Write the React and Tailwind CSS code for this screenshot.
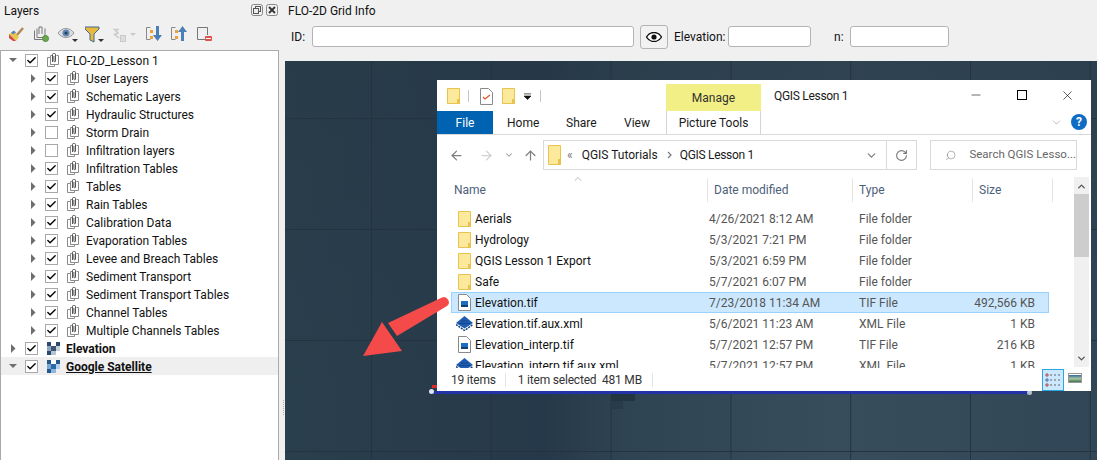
import React from 'react';
import { Check, ChevronDown, ChevronUp, ArrowLeft, ArrowRight, ArrowUp, RotateCw, Search, Minus, X } from 'lucide-react';

const FONT = "font-['Roboto','Noto_Sans',sans-serif]";

const groups = [
  ['User Layers', true],
  ['Schematic Layers', true],
  ['Hydraulic Structures', true],
  ['Storm Drain', false],
  ['Infiltration layers', false],
  ['Infiltration Tables', true],
  ['Tables', true],
  ['Rain Tables', true],
  ['Calibration Data', true],
  ['Evaporation Tables', true],
  ['Levee and Breach Tables', true],
  ['Sediment Transport', true],
  ['Sediment Transport Tables', true],
  ['Channel Tables', true],
  ['Multiple Channels Tables', true],
];

const files = [
  ['Aerials', '4/26/2021 8:12 AM', 'File folder', '', 'folder'],
  ['Hydrology', '5/3/2021 7:21 PM', 'File folder', '', 'folder'],
  ['QGIS Lesson 1 Export', '5/3/2021 6:59 PM', 'File folder', '', 'folder'],
  ['Safe', '5/7/2021 6:07 PM', 'File folder', '', 'folder'],
  ['Elevation.tif', '7/23/2018 11:34 AM', 'TIF File', '492,566 KB', 'tif', true],
  ['Elevation.tif.aux.xml', '5/6/2021 11:23 AM', 'XML File', '1 KB', 'xml'],
  ['Elevation_interp.tif', '5/7/2021 12:57 PM', 'TIF File', '216 KB', 'tif'],
  ['Elevation_interp.tif.aux.xml', '5/7/2021 12:57 PM', 'XML File', '1 KB', 'xml'],
];

const GroupIcon = () => (
  <svg width="13" height="14" viewBox="0 0 13 14" fill="none" stroke="#8a8a8a" strokeWidth="1" className="shrink-0">
    <path d="M3.5 4.5H.5v9h7v-2" />
    <path d="M5.5 2.5h-2v9h8v-9h-2" fill="#fff" />
    <path d="M5.5 9V1.5a1 1 0 0 1 1-1h1a1 1 0 0 1 1 1V8a.8.8 0 0 1-1.6 0V3" stroke="#555" />
  </svg>
);

const RasterIcon = ({ dark }) => (
  <svg width="13" height="13" viewBox="0 0 13 13" className="shrink-0">
    <rect x="0" y="0" width="4" height="4" fill={dark ? '#2c4a6e' : '#24598f'} />
    <rect x="9" y="0" width="4" height="4" fill={dark ? '#2c4a6e' : '#24598f'} />
    <rect x="4" y="0" width="5" height="4" fill="#fff" />
    <rect x="0" y="4" width="4" height="5" fill={dark ? '#8fa6bd' : '#7aa7d4'} />
    <rect x="4" y="4" width="5" height="5" fill={dark ? '#3c5672' : '#2a6aa8'} />
    <rect x="9" y="4" width="4" height="5" fill={dark ? '#c3d0dc' : '#b5d0ea'} />
    <rect x="0" y="9" width="4" height="4" fill={dark ? '#2c4a6e' : '#24598f'} />
    <rect x="4" y="9" width="5" height="4" fill={dark ? '#b4c4d4' : '#8fb8e0'} />
  </svg>
);

const Caret = ({ open }) =>
  open ? (
    <svg width="9" height="6" viewBox="0 0 9 6" className="shrink-0"><path d="M0 1h8L4 5z" fill="#6e6e6e" /></svg>
  ) : (
    <svg width="9" height="9" viewBox="0 0 9 9" className="shrink-0"><path d="M2 0l4.500 4.500L2 9z" fill="#6e6e6e" /></svg>
  );

const Box = ({ checked }) => (
  <span className="w-[13px] h-[13px] border border-[#a8a8a8] bg-white flex items-center justify-center shrink-0">
    {checked && <Check size={11} strokeWidth={3} className="text-black" />}
  </span>
);

const TreeRow = ({ indent, open, checked, icon, children, selected }) => (
  <div className={`h-[18px] flex items-center ${selected ? 'bg-[#efefef]' : ''} ${indent ? 'pl-[26px]' : 'pl-[6px]'}`}>
    <span className="w-[12px] flex items-center justify-center shrink-0"><Caret open={open} /></span>
    <span className="ml-[6px]"><Box checked={checked} /></span>
    <span className="ml-[9px] w-[13px] flex"><span>{icon}</span></span>
    <span className="ml-[6px] pt-px whitespace-nowrap">{children}</span>
  </div>
);

const Toolbar = () => (
  <div className="h-[30px] pb-[2px] flex items-center pl-[8px] shrink-0">
    <svg width="17" height="15" viewBox="0 0 17 15">
      <path d="M1 7l5-3 5 6-3 4z" fill="#e9c84a" />
      <path d="M1 7l7 7-3 0-4-3z" fill="#d14a4a" />
      <path d="M3 5.500l3-2 2 2-3 2z" fill="#5b84c4" />
      <path d="M9 8l6-7" stroke="#b08a52" strokeWidth="2.500" />
    </svg>
    <svg width="15" height="16" viewBox="0 0 15 16" className="ml-[9px]" fill="none" stroke="#777">
      <path d="M.5 4.500v9h8M3 2.500v9h8v-9" />
      <path d="M5 8V1h3v7" />
      <circle cx="11.500" cy="12.500" r="3" fill="#6aa84f" stroke="#4e8a3a" />
    </svg>
    <svg width="20" height="15" viewBox="0 0 20 15" className="ml-[9px]">
      <path d="M0 6c4-6 12-6 16 0-4 6-12 6-16 0z" fill="#dcdcdc" stroke="#999" />
      <circle cx="8" cy="6" r="3.500" fill="#5f86b5" />
      <circle cx="8" cy="6" r="1.500" fill="#24405f" />
      <path d="M14 12h6l-3 3z" fill="#333" />
    </svg>
    <svg width="19" height="17" viewBox="0 0 19 17" className="ml-[7px]">
      <path d="M0 1h14v2l-5 5v8l-4-2V8L0 3z" fill="#e8b93c" stroke="#3c6a96" strokeWidth="1" />
      <path d="M13 13h6l-3 3z" fill="#333" />
    </svg>
    <svg width="24" height="15" viewBox="0 0 24 15" className="ml-[8px]" fill="none" stroke="#c9c9c9">
      <path d="M7 2.500H2.500L6 6 2.500 7.500 7 11" strokeWidth="1.500" />
      <rect x="8.500" y="8.500" width="5" height="6" fill="#ddd" />
      <path d="M18 6h6l-3 3z" fill="#c9c9c9" stroke="none" />
    </svg>
    <svg width="17" height="16" viewBox="0 0 17 16" className="ml-[10px]">
      <path d="M.5 1.500h4M.5 1.500v12h4" fill="none" stroke="#888" />
      <rect x="4" y="4" width="3" height="3" fill="#e9a23b" /><rect x="4" y="10" width="3" height="3" fill="#e9a23b" />
      <path d="M10 0h3v9h3l-4.500 6L7 9h3z" fill="#4c7fb5" />
    </svg>
    <svg width="17" height="16" viewBox="0 0 17 16" className="ml-[8px]">
      <path d="M.5 1.500h4M.5 1.500v12h4" fill="none" stroke="#888" />
      <rect x="4" y="4" width="3" height="3" fill="#e9a23b" /><rect x="4" y="10" width="3" height="3" fill="#e9a23b" />
      <path d="M10 15h3V6h3L11.500 0 7 6h3z" fill="#4c7fb5" />
    </svg>
    <svg width="15" height="15" viewBox="0 0 15 15" className="ml-[9px]">
      <path d="M8 12.500H.5V.500h10V8" fill="none" stroke="#777" />
      <rect x="8" y="9" width="7" height="5" rx="1" fill="#e2504c" />
      <rect x="9" y="11" width="5" height="1" fill="#fff" />
    </svg>
  </div>
);

const Sidebar = () => (
  <div className="w-[285px] h-full shrink-0 flex flex-col relative">
    <div className="h-[20px] flex items-center justify-between pl-[4px] pr-[7px] shrink-0">
      <span className="pt-px">Layers</span>
      <span className="flex gap-[3px]">
        <svg width="12" height="12" viewBox="0 0 12 12" fill="none" stroke="#555">
          <rect x=".5" y=".5" width="11" height="11" rx="2" stroke="#888" />
          <rect x="4.500" y="2.500" width="5" height="5" /><rect x="2.500" y="4.500" width="5" height="5" fill="#eee" />
        </svg>
        <svg width="12" height="12" viewBox="0 0 12 12" fill="none">
          <rect x=".5" y=".5" width="11" height="11" rx="2" stroke="#888" />
          <path d="M3 3l6 6M9 3l-6 6" stroke="#333" strokeWidth="1.800" />
        </svg>
      </span>
    </div>
    <Toolbar />
    <div className="w-[279px] flex-1 bg-white border border-[#aaaaaa] border-b-0 text-[12px] text-[#111]">
      <TreeRow open checked icon={<GroupIcon />}>FLO-2D_Lesson 1</TreeRow>
      {groups.map(([name, on]) => (
        <TreeRow key={name} indent checked={on} icon={<GroupIcon />}>{name}</TreeRow>
      ))}
      <TreeRow checked icon={<RasterIcon dark />}><b>Elevation</b></TreeRow>
      <TreeRow open selected checked icon={<RasterIcon />}><b className="underline">Google Satellite</b></TreeRow>
    </div>
    <div className="absolute right-[1px] top-[400px] w-px h-[15px] border-l border-dotted border-[#aaa]" />
  </div>
);

const GridInfo = () => (
  <div className="h-[61px] shrink-0 text-[12px]">
    <div className="h-[20px] flex items-center pl-[3px] pt-px">FLO-2D Grid Info</div>
    <div className="h-[29px] flex items-center pl-[6px] mt-[2px]">
      <span className="w-[21px] pt-px">ID:</span>
      <span className="w-[322px] h-[21px] bg-white border border-[#b4b4b4] rounded-[3px]" />
      <span className="ml-[6px] w-[28px] h-[24px] bg-[#f2f2f2] border border-[#b4b4b4] rounded-[3px] flex items-center justify-center">
        <svg width="16" height="10" viewBox="0 0 16 10">
          <path d="M.5 5C4-1 12-1 15.500 5 12 11 4 11 .5 5z" fill="#fff" stroke="#111" strokeWidth="1.400" />
          <circle cx="8" cy="5" r="2.600" fill="#111" />
        </svg>
      </span>
      <span className="ml-[6px] w-[54px] pt-px">Elevation:</span>
      <span className="w-[83px] h-[21px] bg-white border border-[#b4b4b4] rounded-[3px]" />
      <span className="ml-[23px] w-[16px] pt-px">n:</span>
      <span className="w-[99px] h-[21px] bg-white border border-[#b4b4b4] rounded-[3px]" />
    </div>
  </div>
);

const Folder = ({ large }) => (
  large ? (
    <svg width="13" height="20" viewBox="0 0 13 20" className="shrink-0">
      <path d="M.5.500h12v19H.5z" fill="#fde99c" stroke="#e8c34e" />
      <rect x="10" y="14" width="3" height="6" fill="#e8c34e" />
    </svg>
  ) : (
    <svg width="13" height="16" viewBox="0 0 13 16" className="shrink-0">
      <path d="M.5.500h12v15H.5z" fill="#fde99c" stroke="#e8c34e" />
      <rect x="10" y="11" width="3" height="5" fill="#e8c34e" />
    </svg>
  )
);

const FileIcon = ({ kind }) => {
  if (kind === 'folder') return <Folder />;
  if (kind === 'tif') {
    return (
      <svg width="13" height="17" viewBox="0 0 13 17" className="shrink-0">
        <path d="M.5.500h8l4 4v12H.5z" fill="#fff" stroke="#8a8a8a" />
        <rect x="3" y="7" width="7" height="6" fill="#1c6fc0" />
        <rect x="3" y="11" width="7" height="2" fill="#123f73" />
      </svg>
    );
  }
  return (
    <svg width="17" height="15" viewBox="0 0 17 15" className="shrink-0">
      <path d="M0 8.500l8.500 6 8.500-6" fill="none" stroke="#123f7f" strokeWidth="1.500" strokeDasharray="2 1" />
      <path d="M8.500 0L17 7l-8.500 5.500L0 7z" fill="#1f5db4" />
      <path d="M5 5h7M3 7.500h11" stroke="#123f7f" strokeWidth=".8" />
    </svg>
  );
};

const Explorer = () => (
  <div className="absolute left-[437px] top-[80px] w-[654px] h-[311px] bg-white flex flex-col text-[12px] text-[#1a1a1a]">
    <div className="h-[31px] flex items-stretch shrink-0 relative">
      <div className="flex items-center pl-[10px] pt-[1px]">
        <Folder />
        <span className="ml-[8px] w-px h-[12px] bg-[#c4c4c4]" />
        <svg width="13" height="17" viewBox="0 0 13 17" className="ml-[11px]">
          <path d="M.5.500h8l4 4v12H.5z" fill="#fff" stroke="#8a8a8a" />
          <path d="M3 9l2 2 5-4" fill="none" stroke="#e0562c" strokeWidth="1.300" />
        </svg>
        <span className="ml-[9px]"><Folder /></span>
        <svg width="7" height="7" viewBox="0 0 8 7" className="ml-[9px]"><path d="M0 .5h8M0 3h8L4 7z" stroke="#111" fill="#111" strokeWidth=".8" /></svg>
        <span className="ml-[9px] w-px h-[12px] bg-[#c4c4c4]" />
      </div>
      <div className="absolute left-[229px] top-[4px] w-[95px] h-[27px] bg-[#f1ef85] flex items-center justify-center text-[#333]">Manage</div>
      <div className="absolute left-[337px] top-0 h-full flex items-center text-[12px] tracking-[-0.3px]">QGIS Lesson 1</div>
      <div className="ml-auto flex items-center pr-[16px] pb-[1px] text-black">
        <Minus size={14} strokeWidth={1} />
        <span className="ml-[34px] w-[10px] h-[10px] border border-black" />
        <X size={15} strokeWidth={1} className="ml-[33px]" />
      </div>
    </div>
    <div className="h-[24px] flex items-stretch shrink-0 border-b border-[#d9d9d9] relative">
      <div className="w-[56px] bg-[#0063b1] text-white flex items-center justify-center">File</div>
      <span className="ml-[14px] w-[59px] flex items-center">Home</span>
      <span className="w-[58px] flex items-center">Share</span>
      <span className="w-[42px] flex items-center">View</span>
      <span className="w-[95px] border-x border-[#d4d4d4] flex items-center justify-center">Picture Tools</span>
      <ChevronDown size={13} strokeWidth={1} className="absolute right-[28px] top-[5px] text-[#888]" />
      <span className="absolute right-[4px] top-[3px] w-[16px] h-[16px] rounded-full bg-[#0f6cc4] text-white font-bold flex items-center justify-center text-[12px]">?</span>
    </div>
    <div className="h-[40px] flex items-center shrink-0 pl-[12px]">
      <ArrowLeft size={15} className="text-[#7f7f7f]" />
      <ArrowRight size={15} className="ml-[15px] text-[#d0d0d0]" />
      <ChevronDown size={10} strokeWidth={2.500} className="ml-[10px] text-[#9a9a9a]" />
      <ArrowUp size={15} className="ml-[9px] text-[#7f7f7f]" />
      <div className="ml-[5px] w-[374px] h-[30px] border border-[#d9d9d9] flex items-center">
        <span className="ml-[4px]"><Folder large /></span>
        <span className="ml-[6px] text-[#777]">«</span>
        <span className="ml-[9px]">QGIS Tutorials</span>
        <svg width="5" height="8" viewBox="0 0 5 8" className="ml-[9px]"><path d="M1 1l3 3-3 3" fill="none" stroke="#777" strokeWidth="1.200" /></svg>
        <span className="ml-[8px] tracking-[-0.3px]">QGIS Lesson 1</span>
        <ChevronDown size={13} strokeWidth={2} className="ml-auto mr-[8px] text-[#777]" />
        <span className="w-[30px] h-full border-l border-[#d9d9d9] flex items-center justify-center">
          <RotateCw size={13} className="text-[#777]" />
        </span>
      </div>
      <div className="ml-[13px] w-[147px] h-[30px] border border-[#d9d9d9] flex items-center text-[#666]">
        <Search size={13} strokeWidth={1} className="ml-[14px] -scale-x-100 text-[#666]" />
        <span className="ml-[13px] whitespace-nowrap text-[11.500px]">Search QGIS Lesso...</span>
      </div>
    </div>
    <div className="flex-1 flex min-h-0 relative">
      <div className="flex-1 min-w-0">
        <div className="h-[24px] mt-[3px] flex items-center text-[#4c607a] relative">
          <span className="w-[271px] h-full pl-[17px] flex items-center border-r border-[#e5e5e5]">Name</span>
          <span className="w-[145px] h-full pl-[6px] flex items-center border-r border-[#e5e5e5]">Date modified</span>
          <span className="w-[120px] h-full pl-[6px] flex items-center border-r border-[#e5e5e5]">Type</span>
          <span className="w-[80px] h-full pl-[6px] flex items-center border-r border-[#e5e5e5]">Size</span>
          <ChevronUp size={12} strokeWidth={1} className="absolute left-[135px] -top-[5px] text-[#777]" />
        </div>
        <div className="h-[160px] mt-[6px] overflow-hidden">
          {files.map(([name, date, type, size, kind, selected]) => (
            <div
              key={name}
              className={`h-[21px] ml-[14px] w-[598px] flex items-center border ${selected ? 'bg-[#cce8ff] border-[#99d1ff]' : 'border-transparent'}`}
            >
              <span className="w-[22px] pl-[2px] flex items-center justify-center"><FileIcon kind={kind} /></span>
              <span className="ml-[1px] w-[234px] whitespace-nowrap text-[#111]">{name}</span>
              <span className="w-[150px] whitespace-nowrap text-[#555]">{date}</span>
              <span className="w-[100px] whitespace-nowrap text-[#555]">{type}</span>
              <span className="w-[76px] text-right whitespace-nowrap text-[#555]">{size}</span>
            </div>
          ))}
        </div>
      </div>
      <div className="w-[15px] mr-[2px] mt-[2px] bg-[#f0f0f0] flex flex-col items-center shrink-0 h-[190px]">
        <ChevronUp size={11} strokeWidth={3} className="mt-[4px] text-[#555]" />
        <div className="w-full h-[63px] mt-[2px] bg-[#cdcdcd]" />
        <ChevronDown size={11} strokeWidth={3} className="mt-auto mb-[3px] text-[#555]" />
      </div>
    </div>
    <div className="h-[22px] flex items-center shrink-0 pl-[14px] relative text-[#333] tracking-[-0.2px]">
      <span>19 items</span>
      <span className="ml-[9px] w-px h-[14px] bg-[#e5e5e5]" />
      <span className="ml-[12px]">1 item selected&nbsp; 481 MB</span>
      <span className="ml-[10px] w-px h-[14px] bg-[#e5e5e5]" />
      <span className="absolute right-[27px] top-0 w-[22px] h-[22px] bg-[#cce8ff] border border-[#29a8e0] flex items-center justify-center">
        <svg width="16" height="14" viewBox="0 0 16 14" fill="none">
          <path d="M5 2h2M9 2h2M13 2h2M5 7h2M9 7h2M13 7h2M5 12h2M9 12h2M13 12h2" stroke="#666" />
          <path d="M1 1h2v2H1z" stroke="#b04a4a" /><path d="M1 6h2v2H1z" stroke="#4a6ab0" /><path d="M1 11h2v2H1z" stroke="#b04a4a" />
        </svg>
      </span>
      <span className="absolute right-[9px] top-[4px] w-[14px] h-[10px] border border-[#999] bg-[linear-gradient(#fff_15%,#3d6d9c_15%,#a8c8a0_60%,#3c6e4a)]" />
    </div>
  </div>
);

const App = () => (
  <div className={`w-[1097px] h-[460px] overflow-hidden bg-[#f0f0f0] flex relative text-[12px] text-[#111] ${FONT}`}>
    <Sidebar />
    <div className="flex-1 flex flex-col min-w-0">
      <GridInfo />
      <div className="flex-1 bg-[linear-gradient(90deg,#22343f_1px,transparent_1px),linear-gradient(#22343f_1px,transparent_1px),linear-gradient(rgba(38,56,70,0.5),transparent_85%),linear-gradient(90deg,#2a3f4c_0%,#26394a_32%,#2f4452_42%,#374d5c_68%,#314757_100%)] bg-[size:119.800px_111px,119.800px_111px,100%_100%,100%_100%] bg-[position:86px_57px,86px_57px,0_0,0_0]" />
    </div>
    <div className="absolute left-[611px] top-[393px] w-[24px] h-[8px] bg-[#233540]" />
    <div className="absolute left-[611px] top-[401px] w-[12px] h-[8px] bg-[#283b49]" />
    <div className="absolute left-[431px] top-[391px] w-[598px] h-[3px] bg-[#2233a8]" />
    <span className="absolute left-[429px] top-[389px] w-[5px] h-[5px] rounded-full bg-[#dfe6f0]" />
    <span className="absolute left-[1027px] top-[390px] w-[5px] h-[5px] rounded-full bg-[#b8c2cc]" />
    <span className="absolute left-[432px] top-[385px] w-[5px] h-[3px] bg-[#d92b2b]" />
    <Explorer />
    <svg width="100" height="70" viewBox="0 0 100 70" className="absolute left-[355px] top-[295px]">
      <path d="M87 2.500a5 5 0 0 1 5 8.500L42 41l-9-13z" fill="#f44a4a" />
      <path d="M8 61L27 27 47 56z" fill="#f44a4a" />
    </svg>
  </div>
);

export default App;
